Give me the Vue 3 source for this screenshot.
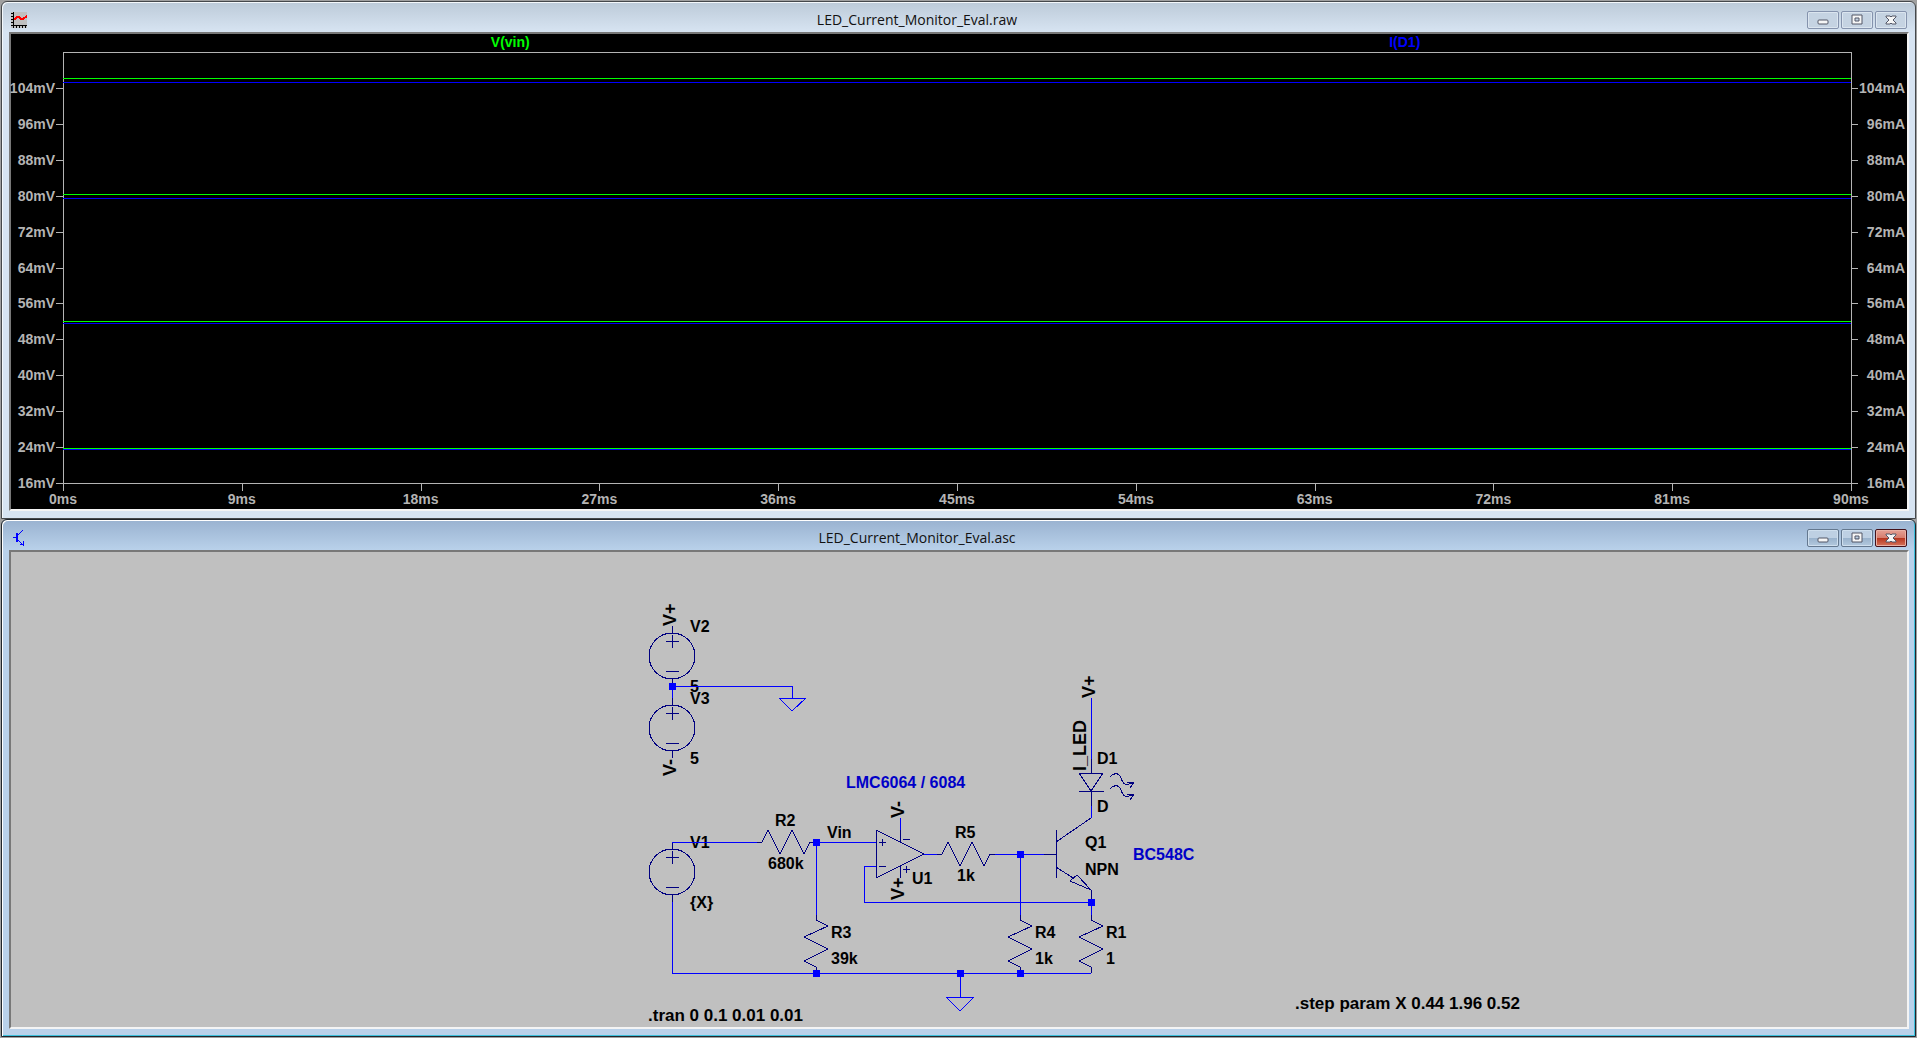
<script setup>
const yTicks = [104, 96, 88, 80, 72, 64, 56, 48, 40, 32, 24, 16]
const xTicks = [0, 9, 18, 27, 36, 45, 54, 63, 72, 81, 90]
const ledCurrent = [105.3, 79.5, 51.6, 23.6]
const vin = [106.2, 80.4, 52.1, 23.8]

const yPos = (value) => ((112 - value) / 96) * 100 + '%'
const xPos = (ms) => (ms / 90) * 100 + '%'

const wires = [
  'M672 686H792V698',
  'M672 686V698',
  'M672 842H757',
  'M672 902V973H1091',
  'M816 842H876',
  'M816 842V915',
  'M876 866H864V902H1091V915',
  'M900 818V830',
  'M924 854H937',
  'M995 854H1044',
  'M1020 854V915',
  'M960 973V997',
  'M1091 698V759',
  'M1091 806V818',
  'M779 698H806L792 711Z',
  'M946 997H974L960 1011Z',
]
const junctions = [
  [672, 686], [816, 842], [816, 973], [960, 973], [1020, 854], [1020, 973], [1091, 902],
]
const sources = [656, 728, 872]
const verticalResistors = [816, 1020, 1091]
const horizontalResistors = [[762, 842], [942, 854]]
const parts = [
  'M672 626V633', 'M672 679V686', 'M672 698V705', 'M672 751V758', 'M672 842V849', 'M672 895V902',
  'M876 830V878L924 854Z',
  'M879 842H886M882 839V846', 'M879 866H886',
  'M900 830V842M903 839H910', 'M900 866V878M903 869H910M906 866V873',
  'M1044 854H1056M1056 830V878',
  'M1056 842L1091 818', 'M1056 867L1073 878',
  'M1091 890L1077 875L1070 881Z', 'M1091 890V902',
  'M1091 759V773', 'M1079 773H1103L1091 791Z', 'M1079 791H1104', 'M1091 791V806',
]
const labels = [
  [690, 632, 'V2'], [690, 692, '5'], [690, 704, 'V3'], [690, 764, '5'],
  [690, 848, 'V1'], [690, 908, '{X}'], [775, 826, 'R2'], [768, 869, '680k'],
  [827, 838, 'Vin'], [831, 938, 'R3'], [831, 964, '39k'], [912, 884, 'U1'],
  [955, 838, 'R5'], [957, 881, '1k'], [1035, 938, 'R4'], [1035, 964, '1k'],
  [1106, 938, 'R1'], [1106, 964, '1'], [1097, 764, 'D1'], [1097, 812, 'D'],
  [1085, 848, 'Q1'], [1085, 875, 'NPN'],
]
const directives = [[648, 1021, '.tran 0 0.1 0.01 0.01'], [1295, 1009, '.step param X 0.44 1.96 0.52']]
const comments = [[846, 788, 'LMC6064 / 6084'], [1133, 860, 'BC548C']]
const netLabels = [
  [676, 626, 'V+'], [676, 776, 'V-'], [904, 818, 'V-'], [904, 900, 'V+'],
  [1095, 698, 'V+'], [1086, 771, 'I_LED'],
]
</script>

<template>
  <main class="workspace">
    <section class="window">
      <header class="titlebar">
        <svg class="icon" width="16" height="16" shape-rendering="crispEdges" aria-hidden="true">
          <rect width="16" height="16" fill="#c0c0c0" />
          <path d="M2 0h1v16h-1zM0 13h16v1H0zM0 1h2v1H0zM0 4h2v1H0zM0 7h2v1H0zM0 10h2v1H0zM5 14h1v2H5zM8 14h1v2H8zM11 14h1v2h-1zM14 14h1v2h-1z" fill="#000" />
          <path d="M3 8L6 5H8L10 7H12L16 4" fill="none" stroke="#f00" stroke-width="2" />
        </svg>
        <h1 class="title">LED_Current_Monitor_Eval.raw</h1>
        <div class="controls">
          <button type="button" class="control" aria-label="Minimize">
            <svg width="14" height="12"><rect x="2" y="6" width="10" height="4" rx="1" class="glyph" /></svg>
          </button>
          <button type="button" class="control" aria-label="Maximize">
            <svg width="14" height="12"><path d="M2 1h10v9H2zM5 4v3h4V4z" class="glyph" fill-rule="evenodd" /></svg>
          </button>
          <button type="button" class="control" aria-label="Close">
            <svg width="14" height="12"><path d="M2 2h4l1 1 1-1h4v1L9 6l3 3v1H8L7 9 6 10H2V9l3-3-3-3z" class="glyph" /></svg>
          </button>
        </div>
      </header>
      <div class="client plot">
        <span class="legend legend-v">V(vin)</span>
        <span class="legend legend-i">I(D1)</span>
        <svg class="axes" shape-rendering="crispEdges">
          <g class="grid">
            <rect width="100%" height="1" />
            <rect y="100%" width="100%" height="1" />
            <rect width="1" height="100%" />
            <rect x="100%" width="1" height="100%" />
          </g>
          <g v-for="v in yTicks" :key="v" class="grid">
            <rect x="-7" :y="yPos(v)" width="7" height="1" />
            <rect x="100%" :y="yPos(v)" width="7" height="1" />
            <text x="-8" :y="yPos(v)" dy="5" text-anchor="end">{{ v }}mV</text>
            <text x="100%" :y="yPos(v)" dx="54" dy="5" text-anchor="end">{{ v }}mA</text>
          </g>
          <g v-for="t in xTicks" :key="t" class="grid">
            <rect :x="xPos(t)" y="100%" width="1" height="8" />
            <text :x="xPos(t)" y="100%" dy="21" text-anchor="middle">{{ t }}ms</text>
          </g>
          <rect v-for="c in ledCurrent" :key="c" :y="yPos(c)" width="100%" height="1" fill="#00f" />
          <rect v-for="c in vin" :key="c" :y="yPos(c)" width="100%" height="1" fill="#0f0" />
        </svg>
      </div>
    </section>

    <section class="window active">
      <header class="titlebar">
        <svg class="icon" width="16" height="16" shape-rendering="crispEdges" aria-hidden="true">
          <path d="M2 7h3v1H2zM5 3h2v9H5z" fill="#00f" />
          <path d="M7 5L12 0M7 10L13 16M9 14H12V11" fill="none" stroke="#00f" />
        </svg>
        <h1 class="title">LED_Current_Monitor_Eval.asc</h1>
        <div class="controls">
          <button type="button" class="control" aria-label="Minimize">
            <svg width="14" height="12"><rect x="2" y="6" width="10" height="4" rx="1" class="glyph" /></svg>
          </button>
          <button type="button" class="control" aria-label="Maximize">
            <svg width="14" height="12"><path d="M2 1h10v9H2zM5 4v3h4V4z" class="glyph" fill-rule="evenodd" /></svg>
          </button>
          <button type="button" class="control close" aria-label="Close">
            <svg width="14" height="12"><path d="M2 2h4l1 1 1-1h4v1L9 6l3 3v1H8L7 9 6 10H2V9l3-3-3-3z" class="glyph" /></svg>
          </button>
        </div>
      </header>
      <div class="client sheet">
        <svg class="schematic" viewBox="11 552 1896 475" shape-rendering="crispEdges">
          <g class="label">
            <text v-for="([x, y, t], i) in labels" :key="i" :x="x" :y="y">{{ t }}</text>
          </g>
          <g class="label directive">
            <text v-for="([x, y, t], i) in directives" :key="i" :x="x" :y="y">{{ t }}</text>
          </g>
          <g class="label net">
            <text v-for="([x, y, t], i) in netLabels" :key="i" :transform="`translate(${x} ${y}) rotate(-90)`">{{ t }}</text>
          </g>
          <g class="label comment">
            <text v-for="([x, y, t], i) in comments" :key="i" :x="x" :y="y">{{ t }}</text>
          </g>
          <g class="part">
            <g v-for="y in sources" :key="y">
              <circle cx="672" :cy="y" r="23" />
              <path :d="`M666 ${y - 15}H679M672 ${y - 21}v13M666 ${y + 15}H679`" />
            </g>
            <path v-for="x in verticalResistors" :key="x" :d="`M${x} 915v5l12 6l-24 11l24 12l-24 12l12 6v6`" />
            <path v-for="([x, y], i) in horizontalResistors" :key="i" :d="`M${x - 5} ${y}h5l6 -12l12 24l12 -24l12 24l6 -12h5`" />
            <path v-for="d in parts" :key="d" :d="d" />
            <path d="M1110 777C1113 773 1119 772 1121 778C1123 784 1125 787 1134 782M1127 782L1134 782L1130 788" />
            <path d="M1110 789C1113 785 1119 784 1121 790C1123 796 1125 799 1134 794M1127 794L1134 794L1130 800" />
          </g>
          <g class="wire"><path v-for="d in wires" :key="d" :d="d" /></g>
          <rect v-for="([x, y], i) in junctions" :key="i" :x="x - 3" :y="y - 3" width="7" height="7" fill="#00f" />
        </svg>
      </div>
    </section>
  </main>
</template>

<style>
body {
  margin: 0;
  background: #a0a0a0;
}
</style>

<style scoped>
.workspace {
  box-sizing: border-box;
  display: grid;
  grid-template-rows: 1fr 1fr;
  min-height: 100vh;
  padding: 1px;
}
.window {
  box-sizing: border-box;
  display: flex;
  flex-direction: column;
  min-height: 0;
  padding: 0 6px 7px 7px;
  border: 1px solid #45484b;
  border-radius: 6px 6px 0 0;
  background: linear-gradient(#bccad8, #d7e4f2 30px);
  box-shadow: inset 1px 1px #f4f8fb;
}
.window.active {
  border-color: #20262c;
  background: linear-gradient(#99b2d0, #b9d1ea 30px);
  box-shadow: inset 1px 1px #fff, inset -1px -1px #3cc0dc;
}
.titlebar {
  box-sizing: border-box;
  display: flex;
  align-items: center;
  height: 30px;
  padding: 6px 2px 0;
}
.title {
  flex: 1;
  margin: 0;
  font: 14px/20px "Open Sans", "Noto Sans", sans-serif;
  text-align: center;
  color: #111;
}
.controls {
  display: flex;
  gap: 2px;
}
.control {
  box-sizing: border-box;
  display: flex;
  align-items: center;
  justify-content: center;
  width: 32px;
  height: 18px;
  padding: 0;
  border: 1px solid #8593ad;
  border-radius: 2px;
  background: #c5d3e2;
  box-shadow: inset 0 0 0 1px #dbe5ef;
}
.active .control {
  border-color: #64788f;
  background: linear-gradient(#bed0e3 50%, #99b2cc 50%, #b3c9de);
  box-shadow: inset 0 0 0 1px #cfdfee;
}
.active .control.close {
  border-color: #43111a;
  background: linear-gradient(#e5a195, #d67c6d 50%, #b6331c 50%, #d5745c);
  box-shadow: inset 0 0 0 1px #e9b0a4;
}
.glyph {
  fill: #f6f6f6;
  stroke: #535666;
}
.client {
  flex: 1;
  min-height: 0;
  border: 2px solid;
  border-color: #787878 #f4f4f4 #f4f4f4 #787878;
}
.plot {
  display: grid;
  grid-template-columns: 52px 1fr 1fr 55px;
  grid-template-rows: 18px 1fr 25px;
  background: #000;
  font: bold 14px/16px "Liberation Sans", Arial, sans-serif;
}
.legend {
  text-align: center;
}
.legend-v {
  grid-column: 2;
  color: #0f0;
}
.legend-i {
  grid-column: 3;
  color: #00f;
}
.axes {
  grid-row: 2;
  grid-column: 2 / 4;
  width: calc(100% - 1px);
  height: calc(100% - 1px);
  overflow: visible;
}
.grid {
  fill: #b4b4b4;
}
.sheet {
  background: #c0c0c0;
}
.schematic {
  display: block;
  width: 100%;
  height: 100%;
}
.label {
  font: bold 16px "Liberation Sans", Arial, sans-serif;
  fill: #000;
}
.directive {
  font-size: 17px;
}
.net {
  font-size: 18px;
}
.comment {
  fill: #0000c8;
}
.part {
  fill: none;
  stroke: #000080;
}
.wire {
  fill: none;
  stroke: #00f;
}
</style>
